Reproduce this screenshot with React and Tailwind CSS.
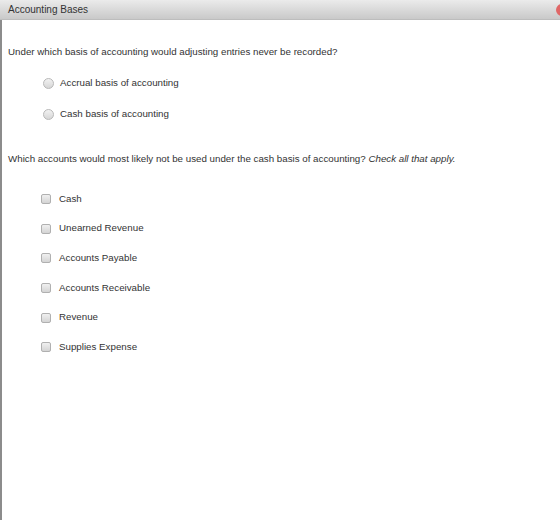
import React from 'react';

const accounts = ['Cash', 'Unearned Revenue', 'Accounts Payable', 'Accounts Receivable', 'Revenue', 'Supplies Expense'];

const Radio = () => (
    <span className="inline-block w-[11px] h-[11px] rounded-full border border-[#b8b8b8] bg-gradient-to-b from-[#f2f2f2] to-[#d6d6d6] shrink-0"></span>
);

const Check = () => (
    <span className="inline-block w-[10px] h-[10px] rounded-[2px] border border-[#b0b0b0] bg-gradient-to-b from-[#f0f0f0] to-[#d4d4d4] shrink-0"></span>
);

const App = () => {
    return (
        <div className="w-[560px] h-[520px] bg-white overflow-hidden text-[9.75px] text-[#333] font-['Liberation_Sans',Arial,sans-serif]">
            {/* Title bar */}
            <div className="h-[20px] flex items-center justify-between pl-2 bg-gradient-to-b from-[#ebebeb] to-[#c9c9c9] border-b border-[#bdbdbd]">
                <span className="text-[10px] text-[#333]">Accounting Bases</span>
                <span className="w-[12px] h-[12px] rounded-full bg-[#e06666] mr-[-8px]"></span>
            </div>

            <div className="h-[500px] border-l-2 border-[#8c8c8c] pl-[6px]">
                <p className="pt-[24px] leading-[16px]">Under which basis of accounting would adjusting entries never be recorded?</p>

                <div className="mt-[16px] pl-[35px] flex flex-col gap-[17px]">
                    <label className="flex items-center gap-[6px] h-[14px]">
                        <Radio />
                        <span>Accrual basis of accounting</span>
                    </label>
                    <label className="flex items-center gap-[6px] h-[14px]">
                        <Radio />
                        <span>Cash basis of accounting</span>
                    </label>
                </div>

                <p className="mt-[30px] leading-[16px]">
                    Which accounts would most likely not be used under the cash basis of accounting? <i>Check all that apply.</i>
                </p>

                <div className="mt-[25px] pl-[33px] flex flex-col gap-[15.7px]">
                    {accounts.map((a) => (
                        <label key={a} className="flex items-center gap-[8px] h-[14px]">
                            <Check />
                            <span>{a}</span>
                        </label>
                    ))}
                </div>
            </div>
        </div>
    );
};

export default App;
